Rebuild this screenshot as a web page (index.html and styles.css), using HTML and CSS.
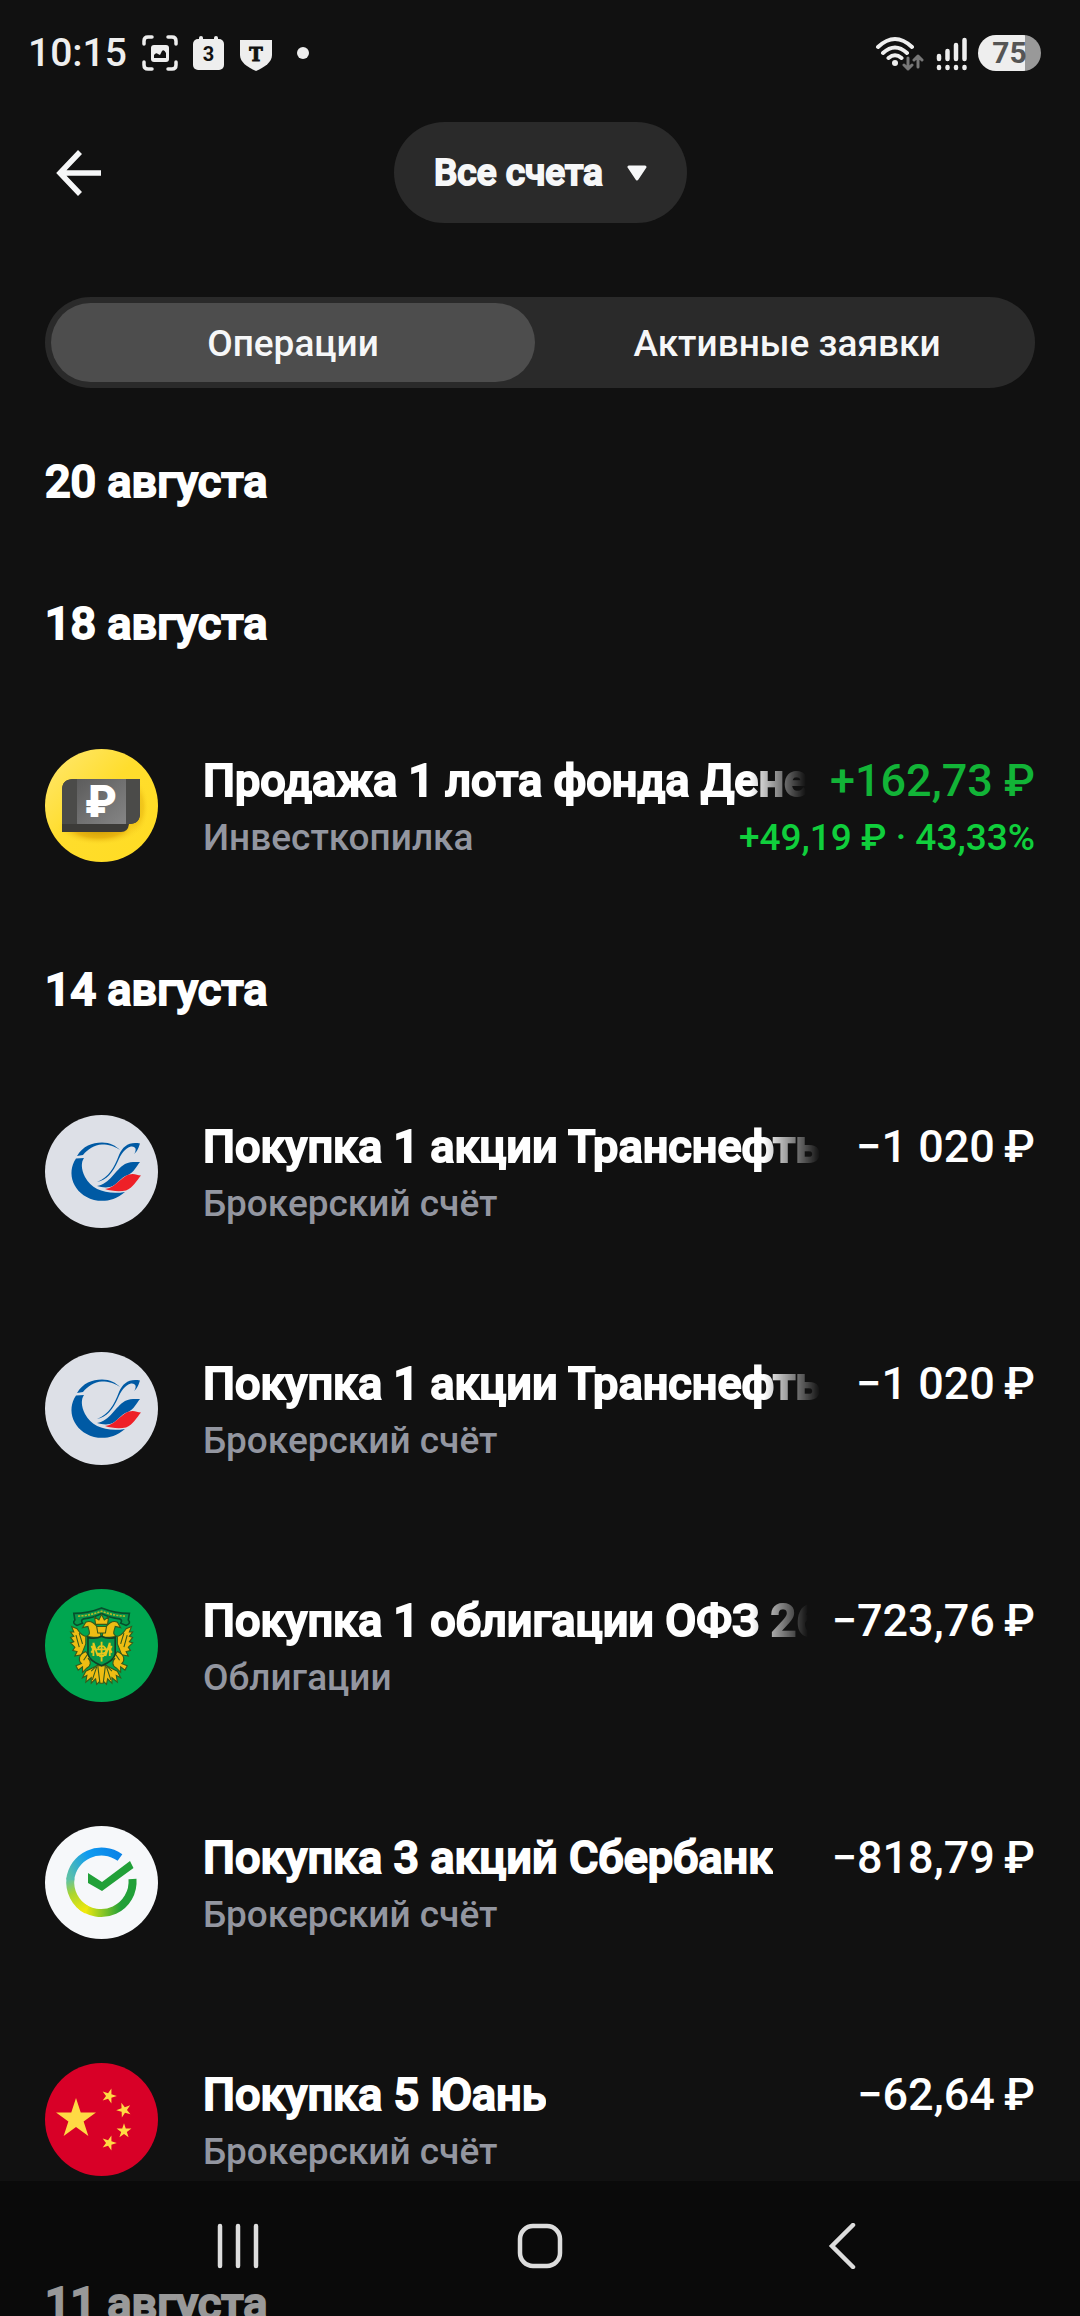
FILE: index.html
```html
<!DOCTYPE html>
<html lang="ru">
<head>
<meta charset="utf-8">
<meta name="viewport" content="width=device-width, initial-scale=1">
<title>Операции</title>
<link rel="stylesheet" href="styles.css">
</head>
<body>
<svg class="defs" width="0" height="0" aria-hidden="true">
  <defs>
    <linearGradient id="cash-bg" x1="0" y1="0" x2="1" y2="1">
      <stop offset="0" stop-color="#ffe873"/><stop offset=".45" stop-color="#ffdd2d"/><stop offset="1" stop-color="#ffdc22"/>
    </linearGradient>
    <linearGradient id="cash-panel" x1="0" y1="0" x2="1" y2="1">
      <stop offset="0" stop-color="#5c5c5c"/><stop offset="1" stop-color="#858585"/>
    </linearGradient>
    <radialGradient id="cash-shadow">
      <stop offset="0" stop-color="#b88a00" stop-opacity=".9"/><stop offset=".6" stop-color="#d89a00" stop-opacity=".6"/><stop offset="1" stop-color="#ffdd2d" stop-opacity="0"/>
    </radialGradient>
    <linearGradient id="sber-a" gradientUnits="userSpaceOnUse" x1="74" y1="32" x2="26" y2="56">
      <stop offset="0" stop-color="#0a84e8"/><stop offset=".5" stop-color="#0f9cf0"/><stop offset="1" stop-color="#5cc1a8"/>
    </linearGradient>
    <linearGradient id="sber-b" gradientUnits="userSpaceOnUse" x1="28" y1="52" x2="42" y2="84">
      <stop offset="0" stop-color="#62c3a2"/><stop offset=".4" stop-color="#a9d52f"/><stop offset="1" stop-color="#f2e90c"/>
    </linearGradient>
    <linearGradient id="sber-c" gradientUnits="userSpaceOnUse" x1="40" y1="82" x2="76" y2="82">
      <stop offset="0" stop-color="#f2e90c"/><stop offset=".35" stop-color="#a7d120"/><stop offset="1" stop-color="#21a038"/>
    </linearGradient>
    <path id="star" d="M0-10 2.25-3.09H9.51L3.63 1.18 5.88 8.09 0 3.82-5.88 8.09-3.63 1.18-9.51-3.09H-2.25Z"/>
    <symbol id="transneft" viewBox="0 0 113 113">
      <circle cx="56.500" cy="56.500" r="56.500" fill="#dde0e7"/>
      <g fill="#005aa4">
        <path d="M32 41C38 31 47 27.500 57 27.500 65 27.500 71 31 75 35 69 31 64 29.500 57 29.500 49 30 43 34 38 40Z"/>
        <path d="M95 28.500C84 26.500 78 31 74 40 69 53 64 62 52 67 62 65 68 57 73 46 76 39 80 33 86 31.500 91 31 92 35 89 39 93 36 94 31 95 28.500Z"/>
        <path d="M31 43.500 39 43C36 47 36 54 40 62 47 75 62 80 80 77 69 86 59 87 49 85 28 79 21 58 31 43.500Z"/>
        <path d="M52 71C65 69 70 55 80 49 85 46.500 90 47 95 47 91 52 89 57 83 60 75 62 73 70 65 72 60 73 56 72 52 71Z"/>
      </g>
      <path d="M60 74C70 73 76 62 84 59.500 89 58 92 60 96 60.500 92 65 88 73 81 75.500 74 77 66 76 60 74Z" fill="#ee2027"/>
    </symbol>
    <g id="eagle-half">
      <path d="M55 42C50 36 47 33 42 35L39 40 44 39C45 43 47 46 43 48 38 48 36 44 34 41L29 39 31 44 28 44 31 48 28 49 31 53 28 54 32 58 30 61 34 62 32 66 38 65 40 60 42 55V48L49 49H56Z"/>
      <path d="M42 62C35 65 35 70 38 73L33 75 35 79 39 76 39 81 43 77C47 75 47 71 44 68L49 71Z"/>
      <path d="M56 73 48 77 42 80 39 86 43 84 42 90 47 86 47 91 51 87 52 92 56 88Z"/>
      <path d="M54 73 47 80M52 76 48 88M36 45 39 55M33 47 36 58M44 64 40 70" fill="none"/>
    </g>
  </defs>
</svg>

<div class="app">
  <div class="status">
    <div class="status-side">
      <span class="clock">10:15</span>
      <svg width="36" height="36" viewBox="0 0 36 36" aria-hidden="true">
        <g fill="none" stroke="#eee" stroke-width="3.500" stroke-linecap="round"><path d="M2 9V6Q2 2 6 2H10M26 2H30Q34 2 34 6V9M34 27V30Q34 34 30 34H26M10 34H6Q2 34 2 30V27"/></g>
        <rect x="9" y="10" width="18" height="17" rx="3" fill="#eee"/><path d="M12 23V20Q14 17 16 19L18 20 20 16Q22 14 24 18V23Z" fill="#111"/>
      </svg>
      <svg width="32" height="36" viewBox="0 0 32 36" aria-hidden="true">
        <rect x="0" y="4" width="31" height="31" rx="5" fill="#eee"/><rect x="6" y="1" width="4" height="6" rx="2" fill="#eee"/><rect x="21" y="1" width="4" height="6" rx="2" fill="#eee"/>
        <text class="glyph-num" x="15.500" y="26">3</text>
      </svg>
      <svg width="32" height="36" viewBox="0 0 32 36" aria-hidden="true">
        <path d="M0 5H32V20C32 27 25 32 16 36 7 32 0 27 0 20Z" fill="#eee"/>
        <text class="glyph-t" x="16" y="26">T</text>
      </svg>
      <span class="dot"></span>
    </div>
    <div class="status-side status-right">
      <svg width="51" height="36" viewBox="0 0 51 36" aria-hidden="true">
        <g fill="none" stroke="#eee" stroke-width="4" stroke-linecap="round"><path d="M3 12Q20-4 37 12M8 18Q20 7 32 18M13.500 23Q20 17.500 26.500 23"/></g>
        <circle cx="20" cy="28" r="3" fill="#eee"/>
        <g fill="none" stroke="#777" stroke-width="3" stroke-linecap="round" stroke-linejoin="round"><path d="M33 23V34M29 30 33 34 37 30M43 32V21M39 25 43 21 47 25"/></g>
      </svg>
      <svg width="32" height="36" viewBox="0 0 32 36" aria-hidden="true">
        <g stroke="#eee" stroke-width="4.500" stroke-linecap="round"><path d="M3 21V24M11.500 16V24M20 10V24M28.500 5V24M3 32V33M11.500 32V33M20 32V33M28.500 32V33"/></g>
      </svg>
      <span class="battery">75</span>
    </div>
  </div>

  <header class="header">
    <button class="back" type="button" aria-label="Назад">
      <svg width="46" height="46" viewBox="0 0 46 46" aria-hidden="true"><path d="M45 23H4M24 2 4 23 24 44" fill="none" stroke="#f6f7f8" stroke-width="5.500"/></svg>
    </button>
    <button class="account" type="button">Все счета
      <svg width="20" height="16" viewBox="0 0 20 16" aria-hidden="true"><path d="M2 2H18L10 14Z" fill="#f6f7f8" stroke="#f6f7f8" stroke-width="3" stroke-linejoin="round"/></svg>
    </button>
  </header>

  <div class="tabs" role="tablist">
    <button class="tab tab-active" type="button" role="tab" aria-selected="true">Операции</button>
    <button class="tab" type="button" role="tab" aria-selected="false">Активные заявки</button>
  </div>

  <main class="list">
    <section><h2 class="date">20 августа</h2></section>

    <section>
      <h2 class="date">18 августа</h2>
      <ul class="rows">
        <li class="row">
          <svg class="logo" viewBox="0 0 113 113" aria-hidden="true">
            <circle cx="56.500" cy="56.500" r="56.500" fill="url(#cash-bg)"/>
            <ellipse cx="54" cy="78" rx="42" ry="18" fill="url(#cash-shadow)"/>
            <ellipse cx="90" cy="58" rx="14" ry="28" fill="url(#cash-shadow)" opacity=".5"/>
            <path d="M17 41Q17 30 29 30H95V64Q95 75 84 75 83 83 76 83H17Z" fill="#3c3b38"/>
            <path d="M17 41Q17 30 29 30H95V64Q95 75 84 75H17Z" fill="#4b4b49"/>
            <path d="M32 30H81V75H32Z" fill="url(#cash-panel)"/>
            <text class="logo-ruble" x="56" y="68">₽</text>
          </svg>
          <div class="info">
            <div class="line"><span class="title fade">Продажа 1 лота фонда Денежный рынок</span><span class="amount gain">+162,73&nbsp;₽</span></div>
            <div class="line sub"><span>Инвесткопилка</span><span class="profit">+49,19 ₽ · 43,33%</span></div>
          </div>
        </li>
      </ul>
    </section>

    <section>
      <h2 class="date">14 августа</h2>
      <ul class="rows">
        <li class="row">
          <svg class="logo" aria-hidden="true"><use href="#transneft"/></svg>
          <div class="info">
            <div class="line"><span class="title fade">Покупка 1 акции Транснефть</span><span class="amount">−1 020&#8201;₽</span></div>
            <div class="line sub"><span>Брокерский счёт</span></div>
          </div>
        </li>
        <li class="row">
          <svg class="logo" aria-hidden="true"><use href="#transneft"/></svg>
          <div class="info">
            <div class="line"><span class="title fade">Покупка 1 акции Транснефть</span><span class="amount">−1 020&#8201;₽</span></div>
            <div class="line sub"><span>Брокерский счёт</span></div>
          </div>
        </li>
        <li class="row">
          <svg class="logo" viewBox="0 0 113 113" aria-hidden="true">
            <circle cx="56.500" cy="56.500" r="56.500" fill="#00a650"/>
            <g transform="translate(-5 -5) scale(1.090)">
            <path d="M31 27Q44 27 56.500 22 69 27 82 27L81 33Q84 36 79 38L74 36Q76 33 73 32 64 31 56.500 27 49 31 40 32 37 33 39 36L34 38Q29 36 32 33Z" fill="#08964a" stroke="#064f2c" stroke-width="1.500"/>
            <path d="M35 29.500Q46 29 56.500 25 67 29 78 29.500" fill="none" stroke="#b5b828" stroke-width="1.500" stroke-dasharray="2 1"/>
            <g fill="#eebd13" stroke="#35591b" stroke-width="1">
              <use href="#eagle-half"/><use href="#eagle-half" transform="matrix(-1 0 0 1 113 0)"/>
              <path d="M51 37 50 30 54 33 56.500 28 59 33 63 30 62 37Z"/>
              <path d="M52 39H61L60 45H53ZM53 75H60L58 91H55Z"/>
            </g>
            <path d="M44 49Q51 51 56.500 48 62 51 69 49V64Q68 70 56.500 75 45 70 44 64Z" fill="#079648" stroke="#123f25" stroke-width="1.500"/>
            <path d="M49 54V66M64 54V66M49 54 53 66M64 54 60 66M48 60H65M56.500 53V71M53 59Q56.500 54 60 59T53 64Q56.500 69 60 64M47 57Q50 60 47 63M66 57Q63 60 66 63" fill="none" stroke="#e8c61c" stroke-width="1.700"/>
            </g>
          </svg>
          <div class="info">
            <div class="line"><span class="title fade">Покупка 1 облигации ОФЗ 26238</span><span class="amount">−723,76&#8201;₽</span></div>
            <div class="line sub"><span>Облигации</span></div>
          </div>
        </li>
        <li class="row">
          <svg class="logo" viewBox="0 0 113 113" aria-hidden="true">
            <circle cx="56.500" cy="56.500" r="56.500" fill="#f6f8fa"/>
            <g fill="none" stroke-width="8">
              <path d="M34 78A31.500 31.500 0 0 0 87.500 53" stroke="url(#sber-c)"/>
              <path d="M25.500 52A31.500 31.500 0 0 0 42 84" stroke="url(#sber-b)"/>
              <path d="M75 31.500A31.500 31.500 0 0 0 25.200 54" stroke="url(#sber-a)"/>
            </g>
            <path d="M43 47 57 56 85 35 88.500 42 57 65 43 57Z" fill="#21a038"/>
          </svg>
          <div class="info">
            <div class="line"><span class="title">Покупка 3 акций Сбербанк</span><span class="amount">−818,79&#8201;₽</span></div>
            <div class="line sub"><span>Брокерский счёт</span></div>
          </div>
        </li>
        <li class="row">
          <svg class="logo" viewBox="0 0 113 113" aria-hidden="true">
            <circle cx="56.500" cy="56.500" r="56.500" fill="#d80027"/>
            <g fill="#ffda44">
              <use href="#star" transform="translate(31 56) scale(2.100)"/>
              <use href="#star" transform="translate(64 33) rotate(18) scale(.780)"/>
              <use href="#star" transform="translate(79 47) rotate(-20) scale(.780)"/>
              <use href="#star" transform="translate(79 68) scale(.780)"/>
              <use href="#star" transform="translate(64 80) rotate(18) scale(.780)"/>
            </g>
          </svg>
          <div class="info">
            <div class="line"><span class="title">Покупка 5 Юань</span><span class="amount">−62,64&#8201;₽</span></div>
            <div class="line sub"><span>Брокерский счёт</span></div>
          </div>
        </li>
      </ul>
    </section>

    <section><h2 class="date">11 августа</h2></section>
  </main>

  <nav class="navbar" aria-label="Системная навигация">
    <button type="button" aria-label="Недавние">
      <svg width="46" height="46" viewBox="0 0 46 46" aria-hidden="true"><path d="M5 3V43M23 3V43M41 3V43" stroke="#ddd" stroke-width="4.500" stroke-linecap="round"/></svg>
    </button>
    <button type="button" aria-label="Домой">
      <svg width="46" height="46" viewBox="0 0 46 46" aria-hidden="true"><rect x="3" y="3" width="40" height="40" rx="13" fill="none" stroke="#ddd" stroke-width="4.500"/></svg>
    </button>
    <button type="button" aria-label="Назад">
      <svg width="46" height="46" viewBox="0 0 46 46" aria-hidden="true"><path d="M34 2 13 23 34 44" fill="none" stroke="#ddd" stroke-width="4.500" stroke-linecap="round"/></svg>
    </button>
  </nav>
</div>
</body>
</html>
```
FILE: styles.css
```css
* { box-sizing: border-box; }

body {
  margin: 0;
  background: #111;
  color: #fff;
  font-family: Roboto, "Noto Sans", sans-serif;
}

button {
  border: 0;
  padding: 0;
  background: none;
  color: #f6f7f8;
  font-family: inherit;
}

svg { display: block; flex-shrink: 0; }
.defs { position: absolute; }

.app {
  display: flex;
  flex-direction: column;
  height: 100vh;
}

/* medium face thickened to a compact bold */
.account, .date, .title {
  font-weight: 500;
  -webkit-text-stroke: 2px currentColor;
}
.account svg { -webkit-text-stroke: 0; }

/* status bar */
.status {
  display: flex;
  justify-content: space-between;
  align-items: center;
  height: 106px;
  padding: 0 39px 0 28px;
  color: #eee;
  flex-shrink: 0;
}
.status-side { display: flex; align-items: center; gap: 15px; }
.status-right { gap: 10px; }
.clock { font-size: 39px; line-height: 48px; font-weight: 500; }
.dot { width: 12px; height: 12px; margin-left: 10px; border-radius: 50%; background: #eee; }
.glyph-num { font: 700 20px Roboto, sans-serif; fill: #111; text-anchor: middle; }
.glyph-t { font: 700 18px "DejaVu Serif", serif; fill: #111; stroke: #111; text-anchor: middle; }
.battery {
  width: 63px;
  border-radius: 18px;
  background: linear-gradient(to right, #eee 75%, #999 75%);
  color: #555;
  font-size: 30px;
  line-height: 36px;
  font-weight: 700;
  text-align: center;
}

/* header */
.header {
  display: grid;
  grid-template-columns: 1fr auto 1fr;
  align-items: center;
  padding: 16px 45px 0 56px;
  flex-shrink: 0;
}
.back { justify-self: start; }
.account {
  display: flex;
  align-items: center;
  gap: 24px;
  margin-right: 10px;
  padding: 0 40px;
  border-radius: 51px;
  background: #2a2a2a;
  font-size: 37px;
  line-height: 101px;
}

/* tabs */
.tabs {
  display: grid;
  grid-template-columns: 1fr 1fr;
  gap: 10px;
  margin: 74px 45px 21px;
  padding: 6px;
  border-radius: 46px;
  background: #2a2a2a;
  flex-shrink: 0;
}
.tab {
  padding-top: 2px;
  border-radius: 40px;
  font-size: 37px;
  line-height: 77px;
  font-weight: 500;
}
.tab-active { background: #4d4d4d; }

/* operations */
.list {
  flex: 1;
  min-height: 0;
  padding: 0 45px;
  overflow-y: auto;
  scrollbar-width: none;
}
.date {
  margin: 0;
  padding: 45px 0 41px;
  font-size: 45px;
  line-height: 56px;
}
.rows {
  display: flex;
  flex-direction: column;
  gap: 13px;
  margin: 0;
  padding: 0;
  list-style: none;
}
.row {
  display: flex;
  align-items: flex-start;
  gap: 45px;
  padding: 56px 0 54px;
}
.logo { width: 113px; height: 113px; }
.logo-ruble { font: 900 44px Roboto, sans-serif; fill: #fff; text-anchor: middle; }
.info { flex: 1; min-width: 0; }
.line {
  display: flex;
  justify-content: space-between;
  gap: 24px;
  line-height: 64px;
  white-space: nowrap;
}
.title {
  min-width: 0;
  overflow: hidden;
  font-size: 45px;
}
.fade {
  -webkit-mask-image: linear-gradient(to left, transparent, #000 56px);
  mask-image: linear-gradient(to left, transparent, #000 56px);
}
.amount { font-size: 45px; font-weight: 500; }
.gain { color: #12b437; }
.sub {
  color: #9396a0;
  font-size: 37px;
  line-height: 50px;
  font-weight: 500;
}
.profit { color: #10cf3c; }

/* system navigation, laid over the list */
.navbar {
  position: fixed;
  right: 0;
  bottom: 0;
  left: 0;
  display: grid;
  grid-template-columns: repeat(3, 1fr);
  height: 135px;
  padding: 0 8% 5px;
  background: rgba(0, 0, 0, .4);
}
.navbar button { display: grid; place-items: center; }
```
